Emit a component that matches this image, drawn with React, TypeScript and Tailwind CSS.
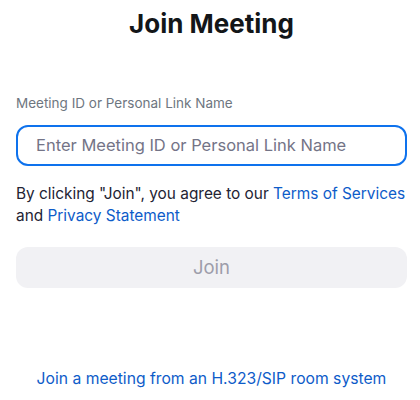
import React from "react";

export default function App() {
  return (
    <div className="w-[420px] h-[400px] bg-white overflow-hidden" style={{ fontFamily: "Inter, 'Noto Sans', sans-serif" }}>
      <div className="pl-4 w-[407px] flex flex-col">
        <h1 className="text-center text-[26px] leading-[32px] font-bold text-[#131619] mt-[8px]">Join Meeting</h1>
        <label className="mt-[54px] text-[13.5px] leading-[18px] text-[#6e7680]">Meeting ID or Personal Link Name</label>
        <div className="mt-[13px] h-[41px] rounded-[12px] border-2 border-[#0e72ed] flex items-center pl-[18px]">
          <span className="text-[16.5px] text-[#747487]">Enter Meeting ID or Personal Link Name</span>
        </div>
        <p className="mt-[17px] text-[15.4px] leading-[22px] text-[#232333]">
          By clicking "Join", you agree to our <span className="text-[#0e5cc9]">Terms of Services</span> and <span className="text-[#0e5cc9]">Privacy Statement</span>
        </p>
        <div className="mt-[20px] h-[41px] rounded-[12px] bg-[#f1f1f4] flex items-center justify-center">
          <span className="text-[18.5px] text-[#9d9daa]">Join</span>
        </div>
        <div className="mt-[81px] text-center text-[15.7px] leading-[20px] text-[#0e5cc9]">Join a meeting from an H.323/SIP room system</div>
      </div>
    </div>
  );
}
